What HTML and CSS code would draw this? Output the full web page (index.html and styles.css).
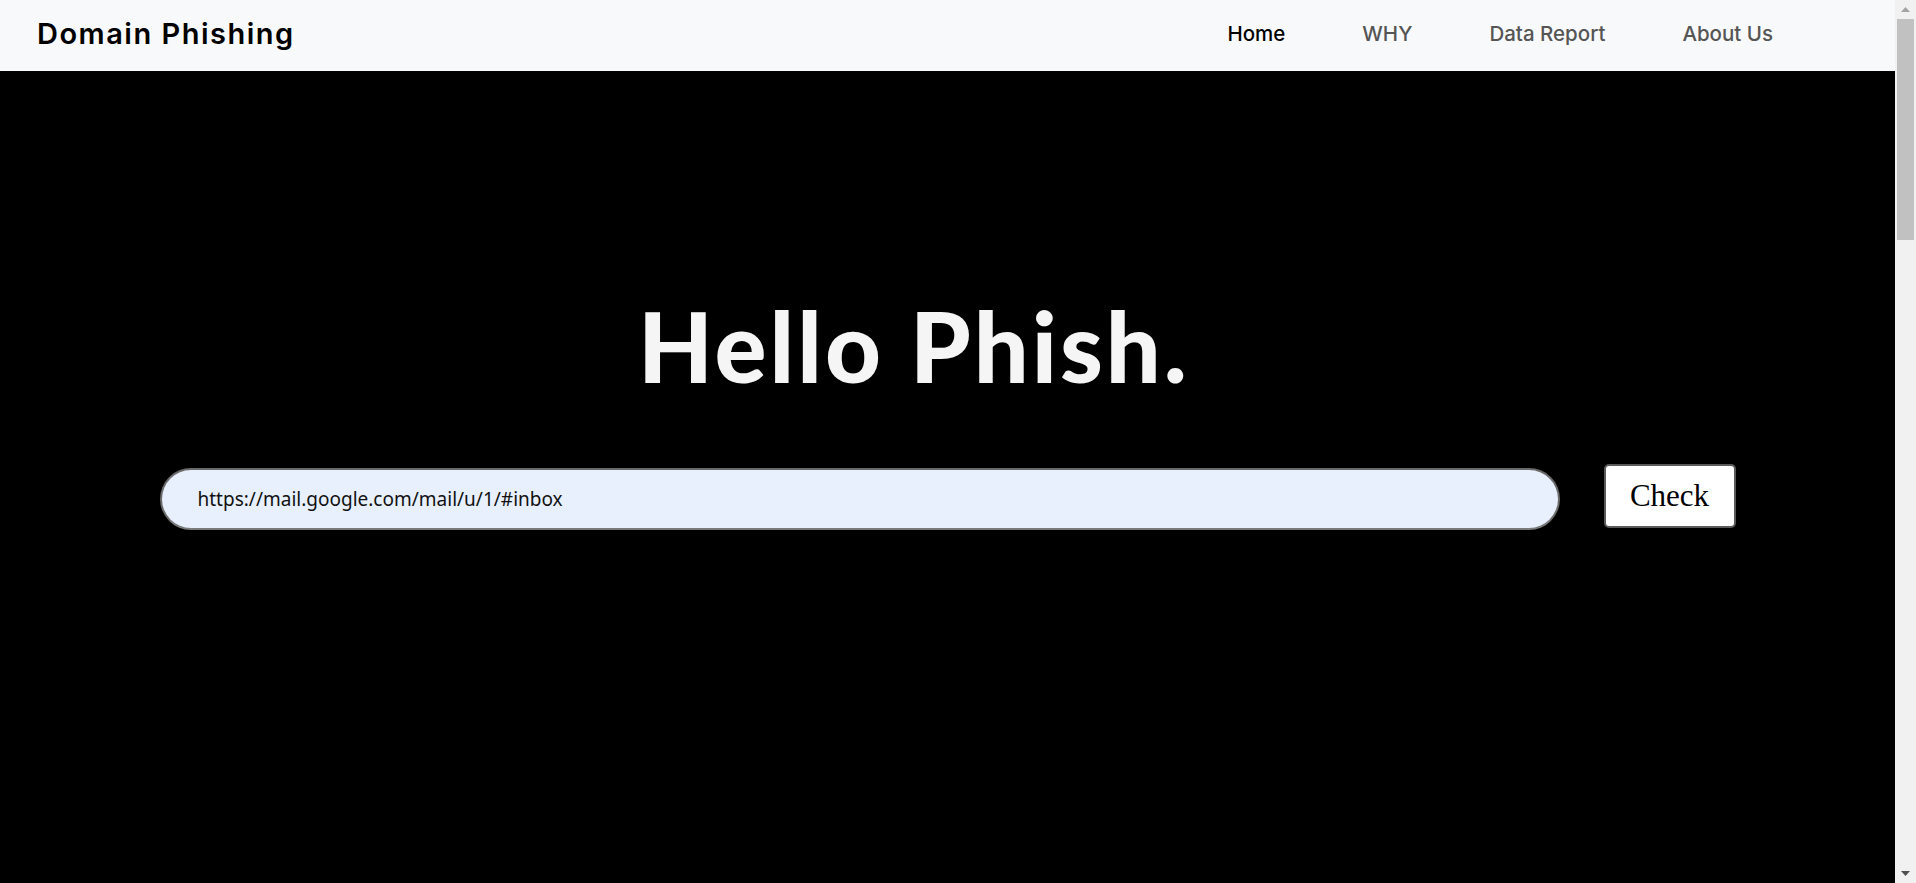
FILE: index.html
```html
<!DOCTYPE html>
<html lang="en">
<head>
<meta charset="utf-8">
<title>Domain Phishing</title>
<link rel="stylesheet" href="styles.css">
</head>
<body>
<div class="page">
  <div class="main">
    <nav class="navbar">
      <a class="brand" href="#">Domain Phishing</a>
      <ul class="nav-links">
        <li><a class="nav-link active" href="#">Home</a></li>
        <li><a class="nav-link" href="#">WHY</a></li>
        <li><a class="nav-link" href="#">Data Report</a></li>
        <li><a class="nav-link" href="#">About Us</a></li>
      </ul>
    </nav>
    <section class="hero">
      <h1 class="hero-title">Hello Phish.</h1>
      <form class="check-form">
        <input class="url-input" type="text" value="https://mail.google.com/mail/u/1/#inbox">
        <button class="check-btn" type="button">Check</button>
      </form>
    </section>
  </div>
  <div class="scrollbar">
    <div class="sb-btn sb-up"><svg width="9" height="5" viewBox="0 0 9 5"><polygon points="4.5,0 9,5 0,5" fill="#a3a3a3"/></svg></div>
    <div class="sb-thumb"></div>
    <div class="sb-track"></div>
    <div class="sb-btn sb-down"><svg width="9" height="5" viewBox="0 0 9 5"><polygon points="0,0 9,0 4.5,5" fill="#505050"/></svg></div>
  </div>
</div>
</body>
</html>
```

FILE: styles.css
```css
html, body {
  margin: 0;
  padding: 0;
  height: 100%;
  overflow: hidden;
}

.page {
  display: flex;
  height: 100vh;
}

.main {
  flex: 1;
  background: #000;
  display: flex;
  flex-direction: column;
  min-width: 0;
}

.navbar {
  height: 71px;
  flex: 0 0 71px;
  background: #f8f9fa;
  display: flex;
  align-items: center;
  justify-content: space-between;
  padding: 0 122px 4px 37px;
  box-sizing: border-box;
}

.brand {
  font-family: "Inter", "Liberation Sans", sans-serif;
  font-weight: 600;
  font-size: 29px;
  color: #000;
  text-decoration: none;
  letter-spacing: 1.5px;
}

.nav-links {
  list-style: none;
  margin: 0;
  padding: 0;
  display: flex;
  gap: 77px;
}

.nav-link {
  font-family: "Inter", "Liberation Sans", sans-serif;
  font-weight: 500;
  font-size: 20.5px;
  color: #555;
  text-decoration: none;
}

.nav-link.active {
  color: #000;
}

.hero {
  display: flex;
  flex-direction: column;
  align-items: center;
  padding-top: 226px;
}

.hero-title {
  margin: 0;
  padding-right: 67px;
  font-family: "Lato", "Liberation Sans", sans-serif;
  font-weight: 900;
  font-size: 97px;
  line-height: 1;
  letter-spacing: 3px;
  color: #f5f5f5;
}

.check-form {
  margin-top: 70px;
  display: flex;
  align-items: flex-start;
  justify-content: center;
  gap: 44px;
}

.url-input {
  width: 1400px;
  height: 62px;
  margin-top: 4px;
  box-sizing: border-box;
  border: 2px solid #6a6a6a;
  border-bottom-color: #7a7a7a;
  border-radius: 31px;
  background: #e8f0fe;
  padding: 0 0 0 36px;
  font-family: "Noto Sans", "Open Sans", sans-serif;
  font-size: 19px;
  color: #111;
  outline: none;
}

.check-btn {
  width: 132px;
  height: 64px;
  box-sizing: border-box;
  background: #fff;
  border: 2px solid #5a5a5a;
  border-radius: 5px;
  font-family: "Liberation Serif", serif;
  font-size: 31px;
  color: #000;
  padding: 0;
}

.scrollbar {
  width: 21px;
  flex: 0 0 21px;
  background: #f1f1f1;
  display: flex;
  flex-direction: column;
  align-items: center;
}

.sb-btn {
  display: flex;
  align-items: center;
  justify-content: center;
  height: 17px;
}

.sb-up {
  padding-top: 1px;
}

.sb-thumb {
  width: 17px;
  height: 221px;
  margin-top: 1px;
  background: #c1c1c1;
}

.sb-track {
  flex: 1;
}

.sb-down {
  height: 12px;
  align-items: flex-start;
  padding-top: 2px;
}
```
